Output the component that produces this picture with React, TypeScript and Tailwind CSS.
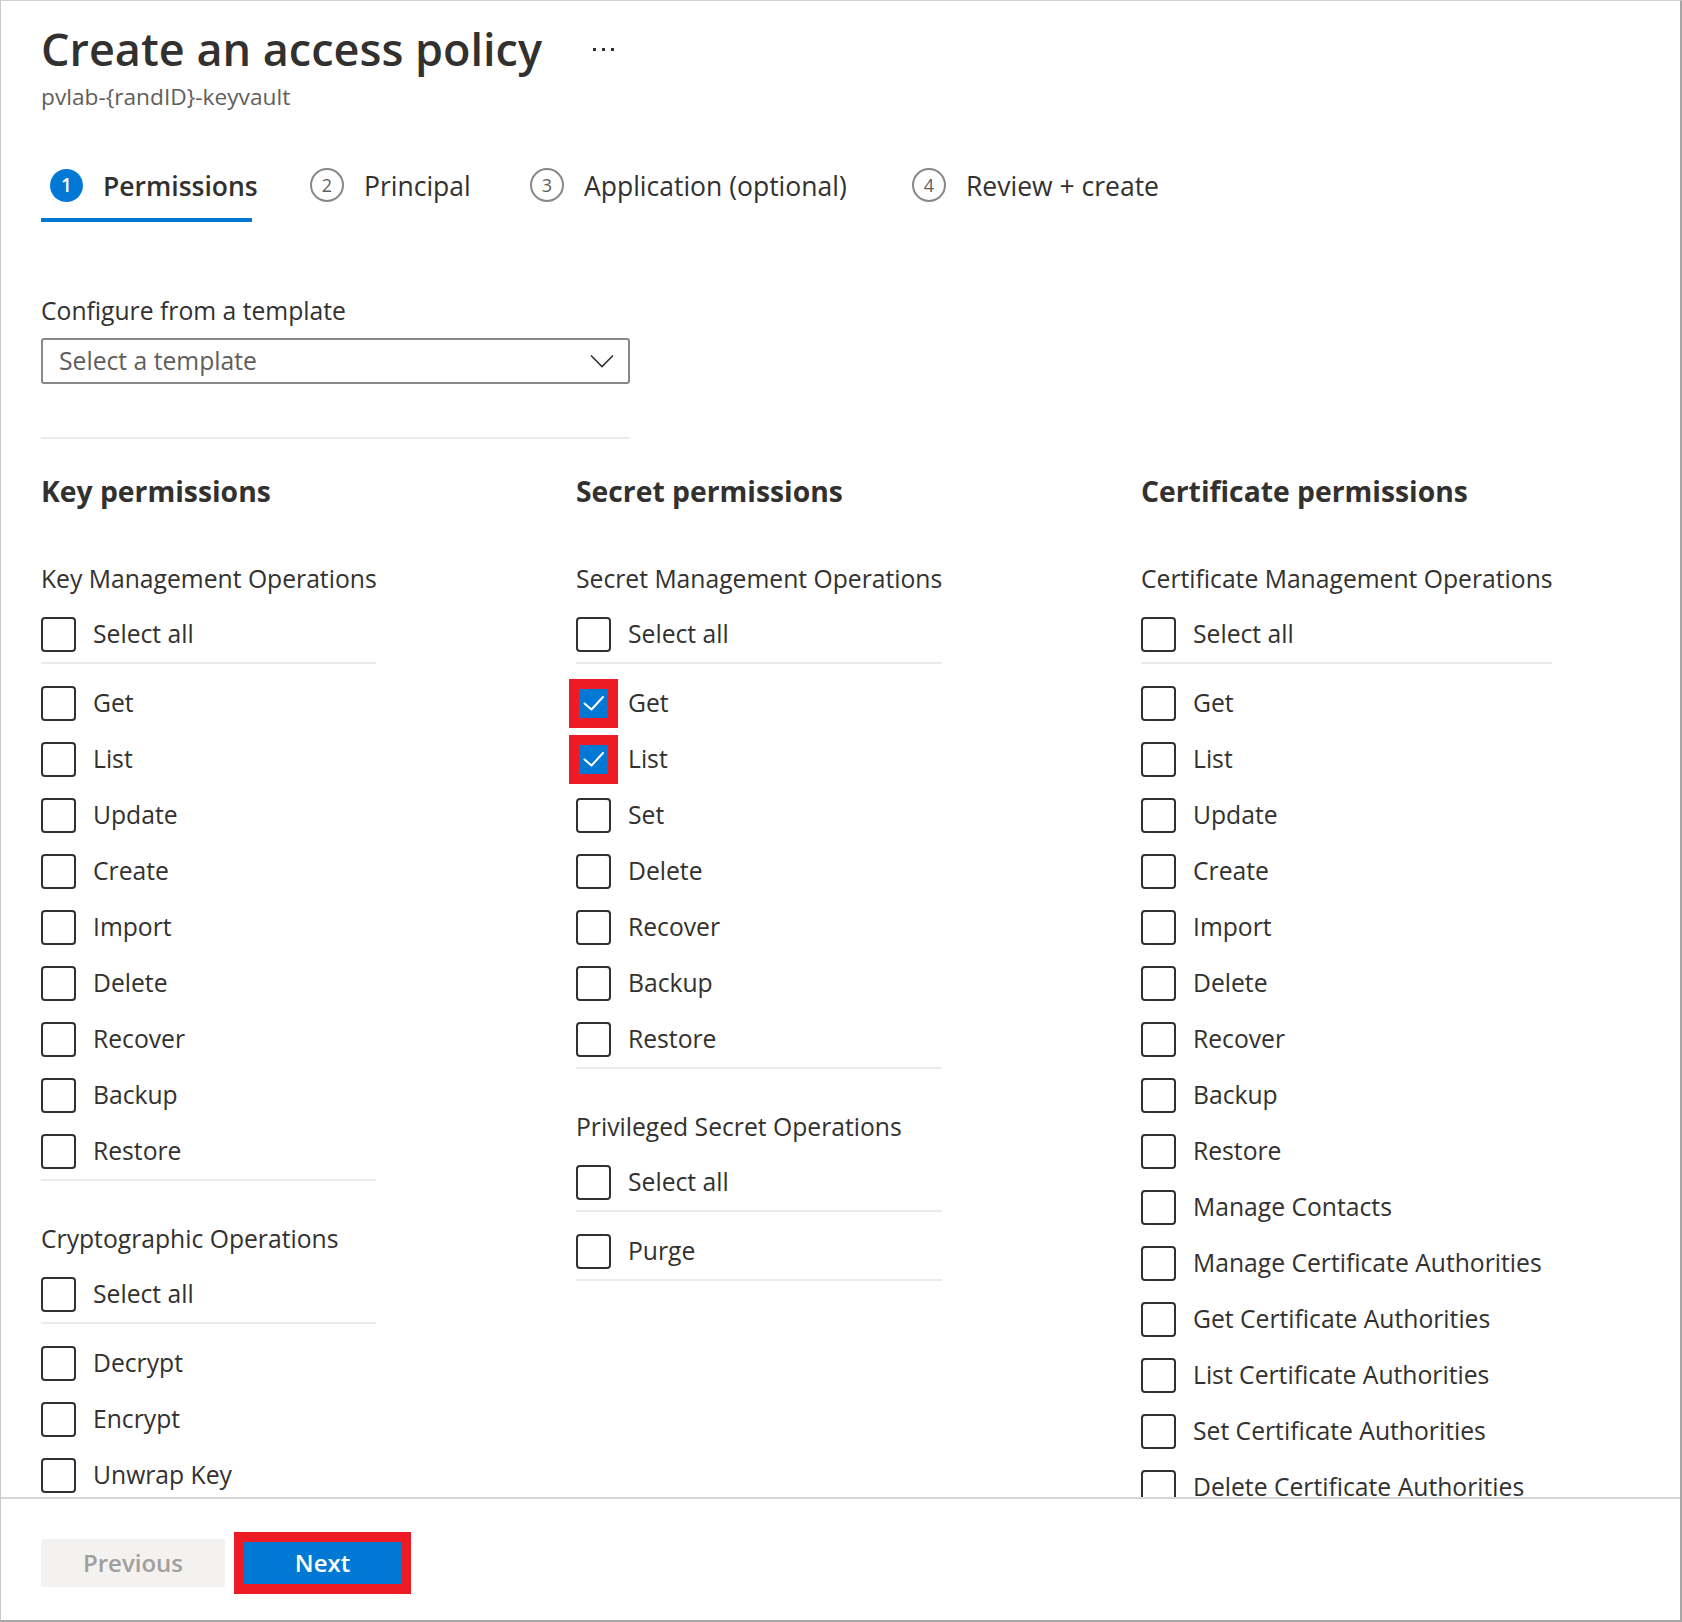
import React from "react";

function Check({ checked, highlight }: { checked?: boolean; highlight?: boolean }) {
  return (
    <span className="relative block w-[35px] h-[35px] shrink-0">
      {checked ? (
        <span className="absolute inset-0 rounded-[4px] bg-[#0078d4] flex items-center justify-center">
          <svg width="35" height="35" viewBox="0 0 35 35">
            <path d="M8.5 17.5 L15.5 23.5 L27 11" fill="none" stroke="white" strokeWidth="2" strokeLinecap="round" strokeLinejoin="round" />
          </svg>
        </span>
      ) : (
        <span className="absolute inset-0 rounded-[4px] border-2 border-[#323130]" />
      )}
      {highlight && <span className="absolute -inset-[7px] border-[10px] border-[#ed1c24]" />}
    </span>
  );
}

function Row({ label, checked, highlight }: { label: string; checked?: boolean; highlight?: boolean }) {
  return (
    <div className="flex items-center h-[56px] gap-[17px]">
      <Check checked={checked} highlight={highlight} />
      <span className="text-[24.7px] leading-none text-[#323130] whitespace-nowrap">{label}</span>
    </div>
  );
}

type Item = { label: string; checked?: boolean; highlight?: boolean };

function Group({ title, items, first, last }: { title: string; items: Item[]; first?: boolean; last?: boolean }) {
  return (
    <div className={first ? "" : "mt-[40px]"}>
      <div className="h-[36px] leading-[36px] text-[24.7px] text-[#323130] whitespace-nowrap">{title}</div>
      <div className="mt-[9px]">
        <Row label="Select all" />
      </div>
      <div className="h-[2px] bg-[#edebe9]" />
      <div className="mt-[11px]">
        {items.map((it) => (
          <Row key={it.label} {...it} />
        ))}
      </div>
      {!last && <div className="h-[2px] bg-[#edebe9]" />}
    </div>
  );
}

function Column({ heading, width, innerWidth, children }: { heading: string; width: string; innerWidth: string; children: React.ReactNode }) {
  return (
    <div className={width + " shrink-0"}>
      <div className="h-[40px] leading-[40px] text-[28.3px] font-bold text-[#323130] whitespace-nowrap">{heading}</div>
      <div className={innerWidth + " mt-[50px]"}>{children}</div>
    </div>
  );
}

function Tab({ n, label, active, textW }: { n: number; label: string; active?: boolean; textW: string }) {
  return (
    <div className={"flex items-center h-[57px] pb-[13px] pl-[9px] border-b-4 " + (active ? "border-[#0078d4]" : "border-transparent")}>
      <div className="flex items-center h-[40px] gap-[20px]">
        {active ? (
          <span className="w-[33px] h-[33px] rounded-full bg-[#0078d4] text-white flex items-center justify-center text-[19px] font-semibold">{n}</span>
        ) : (
          <span className="w-[34px] h-[34px] rounded-full border-2 border-[#8a8886] text-[#605e5c] flex items-center justify-center text-[18px]">{n}</span>
        )}
        <span className={textW + " text-[26.5px] leading-[40px] pt-[2px] whitespace-nowrap text-[#323130] " + (active ? "font-semibold" : "")}>{label}</span>
      </div>
    </div>
  );
}

export default function App() {
  const keyMgmt: Item[] = ["Get", "List", "Update", "Create", "Import", "Delete", "Recover", "Backup", "Restore"].map((l) => ({ label: l }));
  const crypto: Item[] = ["Decrypt", "Encrypt", "Unwrap Key"].map((l) => ({ label: l }));
  const secretMgmt: Item[] = [
    { label: "Get", checked: true, highlight: true },
    { label: "List", checked: true, highlight: true },
    { label: "Set" },
    { label: "Delete" },
    { label: "Recover" },
    { label: "Backup" },
    { label: "Restore" },
  ];
  const certMgmt: Item[] = [
    "Get",
    "List",
    "Update",
    "Create",
    "Import",
    "Delete",
    "Recover",
    "Backup",
    "Restore",
    "Manage Contacts",
    "Manage Certificate Authorities",
    "Get Certificate Authorities",
    "List Certificate Authorities",
    "Set Certificate Authorities",
    "Delete Certificate Authorities",
  ].map((l) => ({ label: l }));

  return (
    <div
      className="w-[1682px] h-[1622px] bg-white border-t border-l border-t-[#d2d2d2] border-l-[#c8c8c8] border-r-2 border-b-2 border-r-[#a6a6a6] border-b-[#a6a6a6] flex flex-col overflow-hidden text-[#323130]"
      style={{ fontFamily: '"Open Sans", "Noto Sans", sans-serif' }}
    >
      <div className="h-[1496px] shrink-0 overflow-hidden pl-[40px]">
        {/* Title */}
        <div className="mt-[18px] flex items-center h-[60px]">
          <h1 className="w-[552px] text-[45px] leading-[60px] font-semibold text-[#323130] whitespace-nowrap">Create an access policy</h1>
          <div className="flex gap-[6px] items-center">
            <span className="w-[3px] h-[3px] bg-[#323130]" />
            <span className="w-[3px] h-[3px] bg-[#323130]" />
            <span className="w-[3px] h-[3px] bg-[#323130]" />
          </div>
        </div>
        <div className="mt-[2px] h-[32px] leading-[32px] text-[22.7px] text-[#605e5c]">pvlab-{"{randID}"}-keyvault</div>

        {/* Tabs */}
        <div className="mt-[52px] flex gap-[49px]">
          <Tab n={1} label="Permissions" active textW="w-[149px]" />
          <Tab n={2} label="Principal" textW="w-[108px]" />
          <Tab n={3} label="Application (optional)" textW="w-[270px]" />
          <Tab n={4} label="Review + create" textW="w-[200px]" />
        </div>

        {/* Template */}
        <div className="mt-[71px] h-[36px] leading-[36px] text-[24.7px]">Configure from a template</div>
        <div className="mt-[9px] w-[589px] h-[46px] border-2 border-[#8a8886] rounded-[3px] flex items-center justify-between pl-[16px] pr-[14px]">
          <span className="text-[24.7px] text-[#605e5c]">Select a template</span>
          <svg width="24" height="14" viewBox="0 0 24 14">
            <polyline points="1,1.5 12,12.5 23,1.5" fill="none" stroke="#323130" strokeWidth="1.6" />
          </svg>
        </div>
        <div className="mt-[53px] w-[589px] h-[2px] bg-[#edebe9]" />

        {/* Columns */}
        <div className="mt-[32px] flex">
          <Column heading="Key permissions" width="w-[535px]" innerWidth="w-[335px]">
            <Group title="Key Management Operations" items={keyMgmt} first />
            <Group title="Cryptographic Operations" items={crypto} last />
          </Column>
          <Column heading="Secret permissions" width="w-[565px]" innerWidth="w-[366px]">
            <Group title="Secret Management Operations" items={secretMgmt} first />
            <Group title="Privileged Secret Operations" items={[{ label: "Purge" }]} />
          </Column>
          <Column heading="Certificate permissions" width="w-[500px]" innerWidth="w-[411px]">
            <Group title="Certificate Management Operations" items={certMgmt} first last />
          </Column>
        </div>
      </div>

      {/* Footer */}
      <div className="flex-1 border-t-2 border-[#d6d6d6] pl-[40px] pt-[33px] flex items-start">
        <div className="flex items-center">
          <button className="w-[184px] h-[48px] bg-[#f3f2f1] rounded-[3px] text-[24px] font-semibold text-[#a19f9d]">Previous</button>
          <div className="ml-[9px] border-[10px] border-[#ed1c24]">
            <button className="w-[157px] h-[42px] bg-[#0078d4] text-[24px] font-semibold text-white flex items-center justify-center">Next</button>
          </div>
        </div>
      </div>
    </div>
  );
}
